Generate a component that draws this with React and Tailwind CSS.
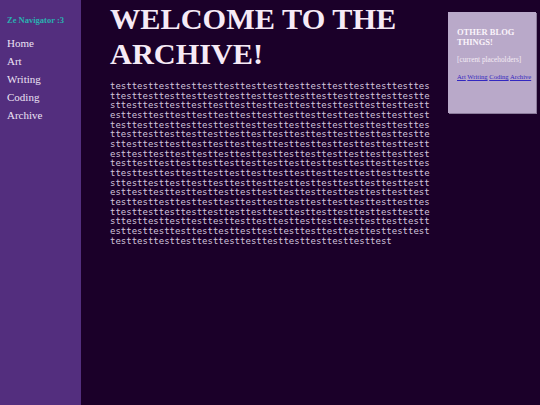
const body = 'test'.repeat(249)

const nav = ['Home', 'Art', 'Writing', 'Coding', 'Archive']
const other = ['Art', 'Writing', 'Coding', 'Archive']

export default function App() {
  return (
    <div className="flex h-[405px] w-[540px] bg-[#1b0029] font-['Liberation_Serif',serif]">
      <aside className="w-[81px] shrink-0 bg-[#532e7e] pl-[7px] pt-[15px]">
        <p className="text-[8.5px] font-bold text-[#2ab0b0] leading-[11px]">Ze Navigator :3</p>
        <ul className="mt-[8px] flex flex-col">
          {nav.map(n => (
            <li key={n} className="text-[11px] leading-[18px] text-[#ece2f4]">{n}</li>
          ))}
        </ul>
      </aside>

      <main className="w-[340px] shrink-0 pl-[29px] pt-[2px]">
        <h1 className="text-[30.3px] font-bold leading-[35px] text-[#f6eaf6]">WELCOME TO THE ARCHIVE!</h1>
        <p className="mt-[10px] w-[321px] break-all font-['DejaVu_Sans_Mono',monospace] text-[9px] leading-[9.65px] text-[#d2c4dc]">
          {body}
        </p>
      </main>

      <div className="pl-[27px] pt-[12px]">
        <div className="h-[101px] w-[88px] bg-[#b9a9c9] px-[9px] pt-[15px] shadow-[1px_1px_0_#8a7a9a]">
          <h2 className="text-[8.5px] font-bold leading-[10px] text-[#fbf4fb]">OTHER BLOG THINGS!</h2>
          <p className="mt-[8px] text-[7.3px] leading-[9px] text-[#f4ecf4]">[current placeholders]</p>
          <p className="mt-[8px] text-[6.6px] leading-[9px] whitespace-nowrap">
            {other.map((o, i) => (
              <span key={o}>
                <a href="#" className="text-[#3328c0] underline">{o}</a>
                {i < other.length - 1 ? ' ' : ''}
              </span>
            ))}
          </p>
        </div>
      </div>
    </div>
  )
}
